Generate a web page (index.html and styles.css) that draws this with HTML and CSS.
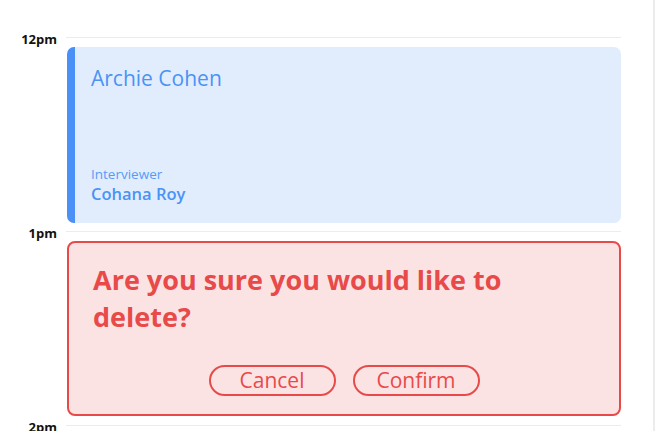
FILE: index.html
```html
<!DOCTYPE html>
<html>
<head>
<meta charset="utf-8">
<link rel="stylesheet" href="styles.css">
</head>
<body>
<div class="calendar">
  <div class="slot slot-partial">
    <div class="time"></div>
    <div class="lane"></div>
  </div>
  <div class="slot">
    <div class="time"><span class="label">12pm</span></div>
    <div class="lane">
      <div class="event">
        <div class="event-title">Archie Cohen</div>
        <div class="event-meta">
          <div class="meta-label">Interviewer</div>
          <div class="meta-value">Cohana Roy</div>
        </div>
      </div>
    </div>
  </div>
  <div class="slot">
    <div class="time"><span class="label">1pm</span></div>
    <div class="lane">
      <div class="confirm">
        <div class="confirm-text">Are you sure you would like to delete?</div>
        <div class="actions">
          <button class="btn">Cancel</button>
          <button class="btn">Confirm</button>
        </div>
      </div>
    </div>
  </div>
  <div class="slot">
    <div class="time"><span class="label">2pm</span></div>
    <div class="lane"></div>
  </div>
</div>
</body>
</html>
```
FILE: styles.css
```css
* { box-sizing: border-box; }
html, body { margin: 0; padding: 0; background: #fff; }
body { font-family: "Open Sans", "Noto Sans", sans-serif; overflow: hidden; height: 431px; }

.calendar {
  width: 655px;
  border-right: 2px solid #ececec;
  height: 431px;
  padding-right: 32px;
}

.slot {
  display: grid;
  grid-template-columns: 66px 1fr;
  height: 194px;
}
.slot-partial { height: 37px; }

.time {
  display: flex;
  justify-content: flex-end;
  padding-right: 9px;
}
.label {
  font-weight: 700;
  font-size: 13px;
  line-height: 16px;
  color: #111;
  margin-top: -6px;
}
.slot-partial .lane { border-top: none; }
.lane {
  border-top: 1px solid #ececec;
  padding-top: 9px;
}

.event {
  margin-left: 1px;
  height: 176px;
  background: #e1edfd;
  border-left: 8px solid #4a90f7;
  border-radius: 7px;
  padding: 18px 16px 19px 16px;
  display: flex;
  flex-direction: column;
  justify-content: space-between;
  color: #4a93f5;
}
.event-title { font-size: 21px; line-height: 27px; }
.meta-label { font-size: 13.5px; line-height: 18px; font-weight: 400; opacity: 0.9; }
.meta-value { font-size: 16.5px; line-height: 21px; font-weight: 600; }

.confirm {
  margin-left: 1px;
  height: 175px;
  background: #fbe3e4;
  border: 2px solid #e84a4a;
  border-radius: 8px;
  padding: 18px 24px 18px 24px;
  color: #e84a4a;
  display: flex;
  flex-direction: column;
  justify-content: space-between;
}
.confirm-text { font-size: 27px; line-height: 37px; font-weight: 700; max-width: 430px; }
.actions { display: flex; justify-content: center; gap: 17px; }
.btn {
  font-family: inherit;
  width: 127px;
  height: 31px;
  border: 2px solid #e84a4a;
  border-radius: 16px;
  background: transparent;
  color: #e84a4a;
  font-size: 21px;
  line-height: 25px;
  padding: 0;
}
```
